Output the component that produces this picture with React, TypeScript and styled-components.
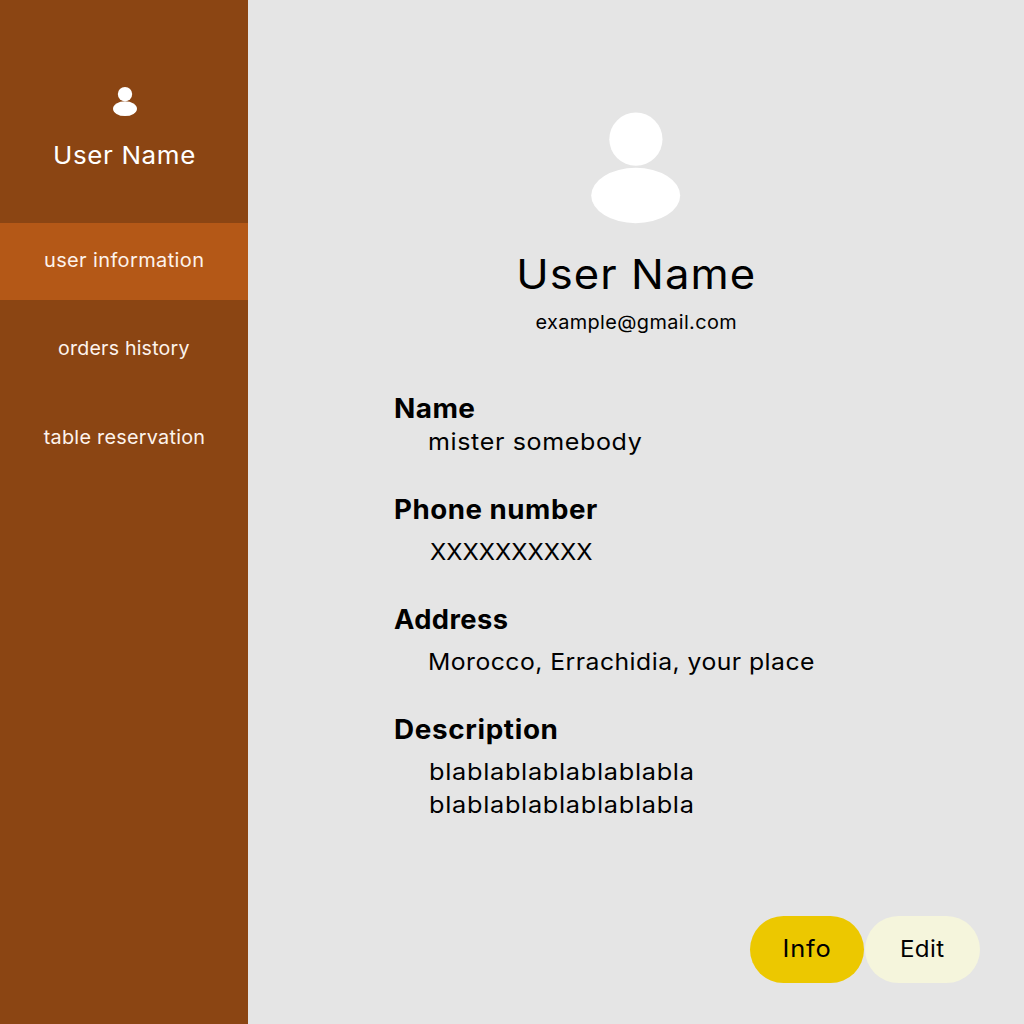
import React from 'react';
import styled, { createGlobalStyle } from 'styled-components';

const GlobalStyle = createGlobalStyle`
  *, *::before, *::after { box-sizing: border-box; }
  body { margin: 0; background: #e5e5e5; }
`;

const Page = styled.div`
  display: flex;
  width: 1024px;
  height: 1024px;
  overflow: hidden;
  font-family: Inter, 'Liberation Sans', sans-serif;
  color: #000;
  background: #e5e5e5;
`;

/* Widens the letterforms a little. The negative margin drops the spacing
   after the last letter so centred text stays centred. */
const Label = styled.span<{ $spacing: number; $stretch: number; $origin?: string }>`
  display: inline-block;
  letter-spacing: ${({ $spacing }) => $spacing}px;
  margin-right: ${({ $spacing }) => -$spacing}px;
  transform: scaleX(${({ $stretch }) => $stretch});
  transform-origin: ${({ $origin = 'center' }) => $origin};
  white-space: nowrap;
`;

const Sidebar = styled.aside`
  display: flex;
  flex-direction: column;
  flex: 0 0 248px;
  background: #8b4513;
  color: #fff;
`;

const Profile = styled.div`
  display: flex;
  flex-direction: column;
  align-items: center;
  height: 223px;
  padding: 86px 0 0 1px;
`;

const SmallAvatar = styled.svg`
  display: block;
  width: 26px;
  height: 31px;
  fill: #fff;
`;

const ProfileName = styled.div`
  margin-top: 23px;
  font-size: 24.5px;
  line-height: 30px;
`;

const Nav = styled.nav`
  display: flex;
  flex-direction: column;
`;

const NavItem = styled.a<{ $active?: boolean }>`
  display: flex;
  justify-content: center;
  height: 77px;
  margin-bottom: 11px;
  font-size: 19px;
  line-height: 76px;
  color: #fdf3ec;
  background: ${({ $active }) => ($active ? '#b45817' : 'transparent')};

  &:last-child {
    margin-top: 1px;
  }
`;

const Main = styled.main`
  display: flex;
  flex-direction: column;
  flex: 1;
`;

const Header = styled.header`
  display: flex;
  flex-direction: column;
  align-items: center;
  padding-top: 112px;
`;

const LargeAvatar = styled.svg`
  display: block;
  width: 90px;
  height: 112px;
  fill: #fff;
`;

const Title = styled.h1`
  margin: 24px 0 0;
  font-size: 41.5px;
  font-weight: 400;
  line-height: 52px;
`;

const Email = styled.div`
  margin-top: 11px;
  font-size: 19px;
  line-height: 24px;
`;

const Details = styled.dl`
  display: flex;
  flex-direction: column;
  margin: 57px 0 0;
  padding-left: 146px;
`;

const Term = styled.dt`
  font-size: 26.5px;
  font-weight: 700;
  line-height: 33px;
`;

const Value = styled.dd<{ $indent: number; $gap?: number }>`
  display: flex;
  flex-direction: column;
  align-items: flex-start;
  margin: ${({ $gap = 9 }) => $gap}px 0 35px ${({ $indent }) => $indent}px;
  font-size: 23.5px;
  line-height: 33px;
`;

const Actions = styled.div`
  display: flex;
  justify-content: flex-end;
  gap: 1px;
  margin-top: auto;
  padding: 0 44.5px 41px 0;
`;

const Button = styled.button<{ $color: string; $size: number; $leading: number }>`
  display: flex;
  justify-content: center;
  width: 114.5px;
  height: 67px;
  padding: 0;
  border: 0;
  border-radius: 34px;
  font-family: inherit;
  font-size: ${({ $size }) => $size}px;
  line-height: ${({ $leading }) => $leading}px;
  color: #000;
  background: ${({ $color }) => $color};
`;

const navItems = [
  { text: 'user information', spacing: 0.35, stretch: 1.053, active: true },
  { text: 'orders history', spacing: 0.2, stretch: 1.03 },
  { text: 'table reservation', spacing: 0.25, stretch: 1.042 },
];

const details = [
  {
    term: 'Name',
    termSpacing: 0.4,
    termStretch: 1.055,
    lines: ['mister somebody'],
    spacing: 0.6,
    stretch: 1.065,
    indent: 34,
    gap: 0,
  },
  {
    term: 'Phone number',
    termSpacing: 0.5,
    termStretch: 1.045,
    lines: ['XXXXXXXXXX'],
    spacing: 0,
    stretch: 1.014,
    indent: 35.5,
  },
  {
    term: 'Address',
    termSpacing: 0.4,
    termStretch: 1.03,
    lines: ['Morocco, Errachidia, your place'],
    spacing: 0.45,
    stretch: 1.052,
    indent: 33.5,
  },
  {
    term: 'Description',
    termSpacing: 0.6,
    termStretch: 1.052,
    lines: ['blablablablablablabla', 'blablablablablablabla'],
    spacing: 0.65,
    stretch: 1.077,
    indent: 35,
  },
];

export default function App() {
  return (
    <>
      <GlobalStyle />
      <Page>
        <Sidebar>
          <Profile>
            <SmallAvatar viewBox="0 0 26 31">
              <circle cx="13" cy="8.1" r="7.2" />
              <ellipse cx="13" cy="22.7" rx="12" ry="7.4" />
            </SmallAvatar>
            <ProfileName>
              <Label $spacing={0.6} $stretch={1.06}>
                User Name
              </Label>
            </ProfileName>
          </Profile>
          <Nav>
            {navItems.map((item) => (
              <NavItem key={item.text} $active={item.active}>
                <Label $spacing={item.spacing} $stretch={item.stretch}>
                  {item.text}
                </Label>
              </NavItem>
            ))}
          </Nav>
        </Sidebar>
        <Main>
          <Header>
            <LargeAvatar viewBox="0 0 90 112">
              <circle cx="44.9" cy="27.2" r="26.6" />
              <ellipse cx="44.7" cy="83.5" rx="44.5" ry="27.7" />
            </LargeAvatar>
            <Title>
              <Label $spacing={1} $stretch={1.05}>
                User Name
              </Label>
            </Title>
            <Email>
              <Label $spacing={0.35} $stretch={1.047}>
                example@gmail.com
              </Label>
            </Email>
          </Header>
          <Details>
            {details.map((d) => (
              <React.Fragment key={d.term}>
                <Term>
                  <Label $spacing={d.termSpacing} $stretch={d.termStretch} $origin="left">
                    {d.term}
                  </Label>
                </Term>
                <Value $indent={d.indent} $gap={d.gap}>
                  {d.lines.map((line, i) => (
                    <Label key={i} $spacing={d.spacing} $stretch={d.stretch} $origin="left">
                      {line}
                    </Label>
                  ))}
                </Value>
              </React.Fragment>
            ))}
          </Details>
          <Actions>
            <Button $color="#ecc800" $size={24} $leading={65}>
              <Label $spacing={0.7} $stretch={1.06}>
                Info
              </Label>
            </Button>
            <Button $color="#f5f5dc" $size={23} $leading={67}>
              <Label $spacing={0.4} $stretch={1.05}>
                Edit
              </Label>
            </Button>
          </Actions>
        </Main>
      </Page>
    </>
  );
}
